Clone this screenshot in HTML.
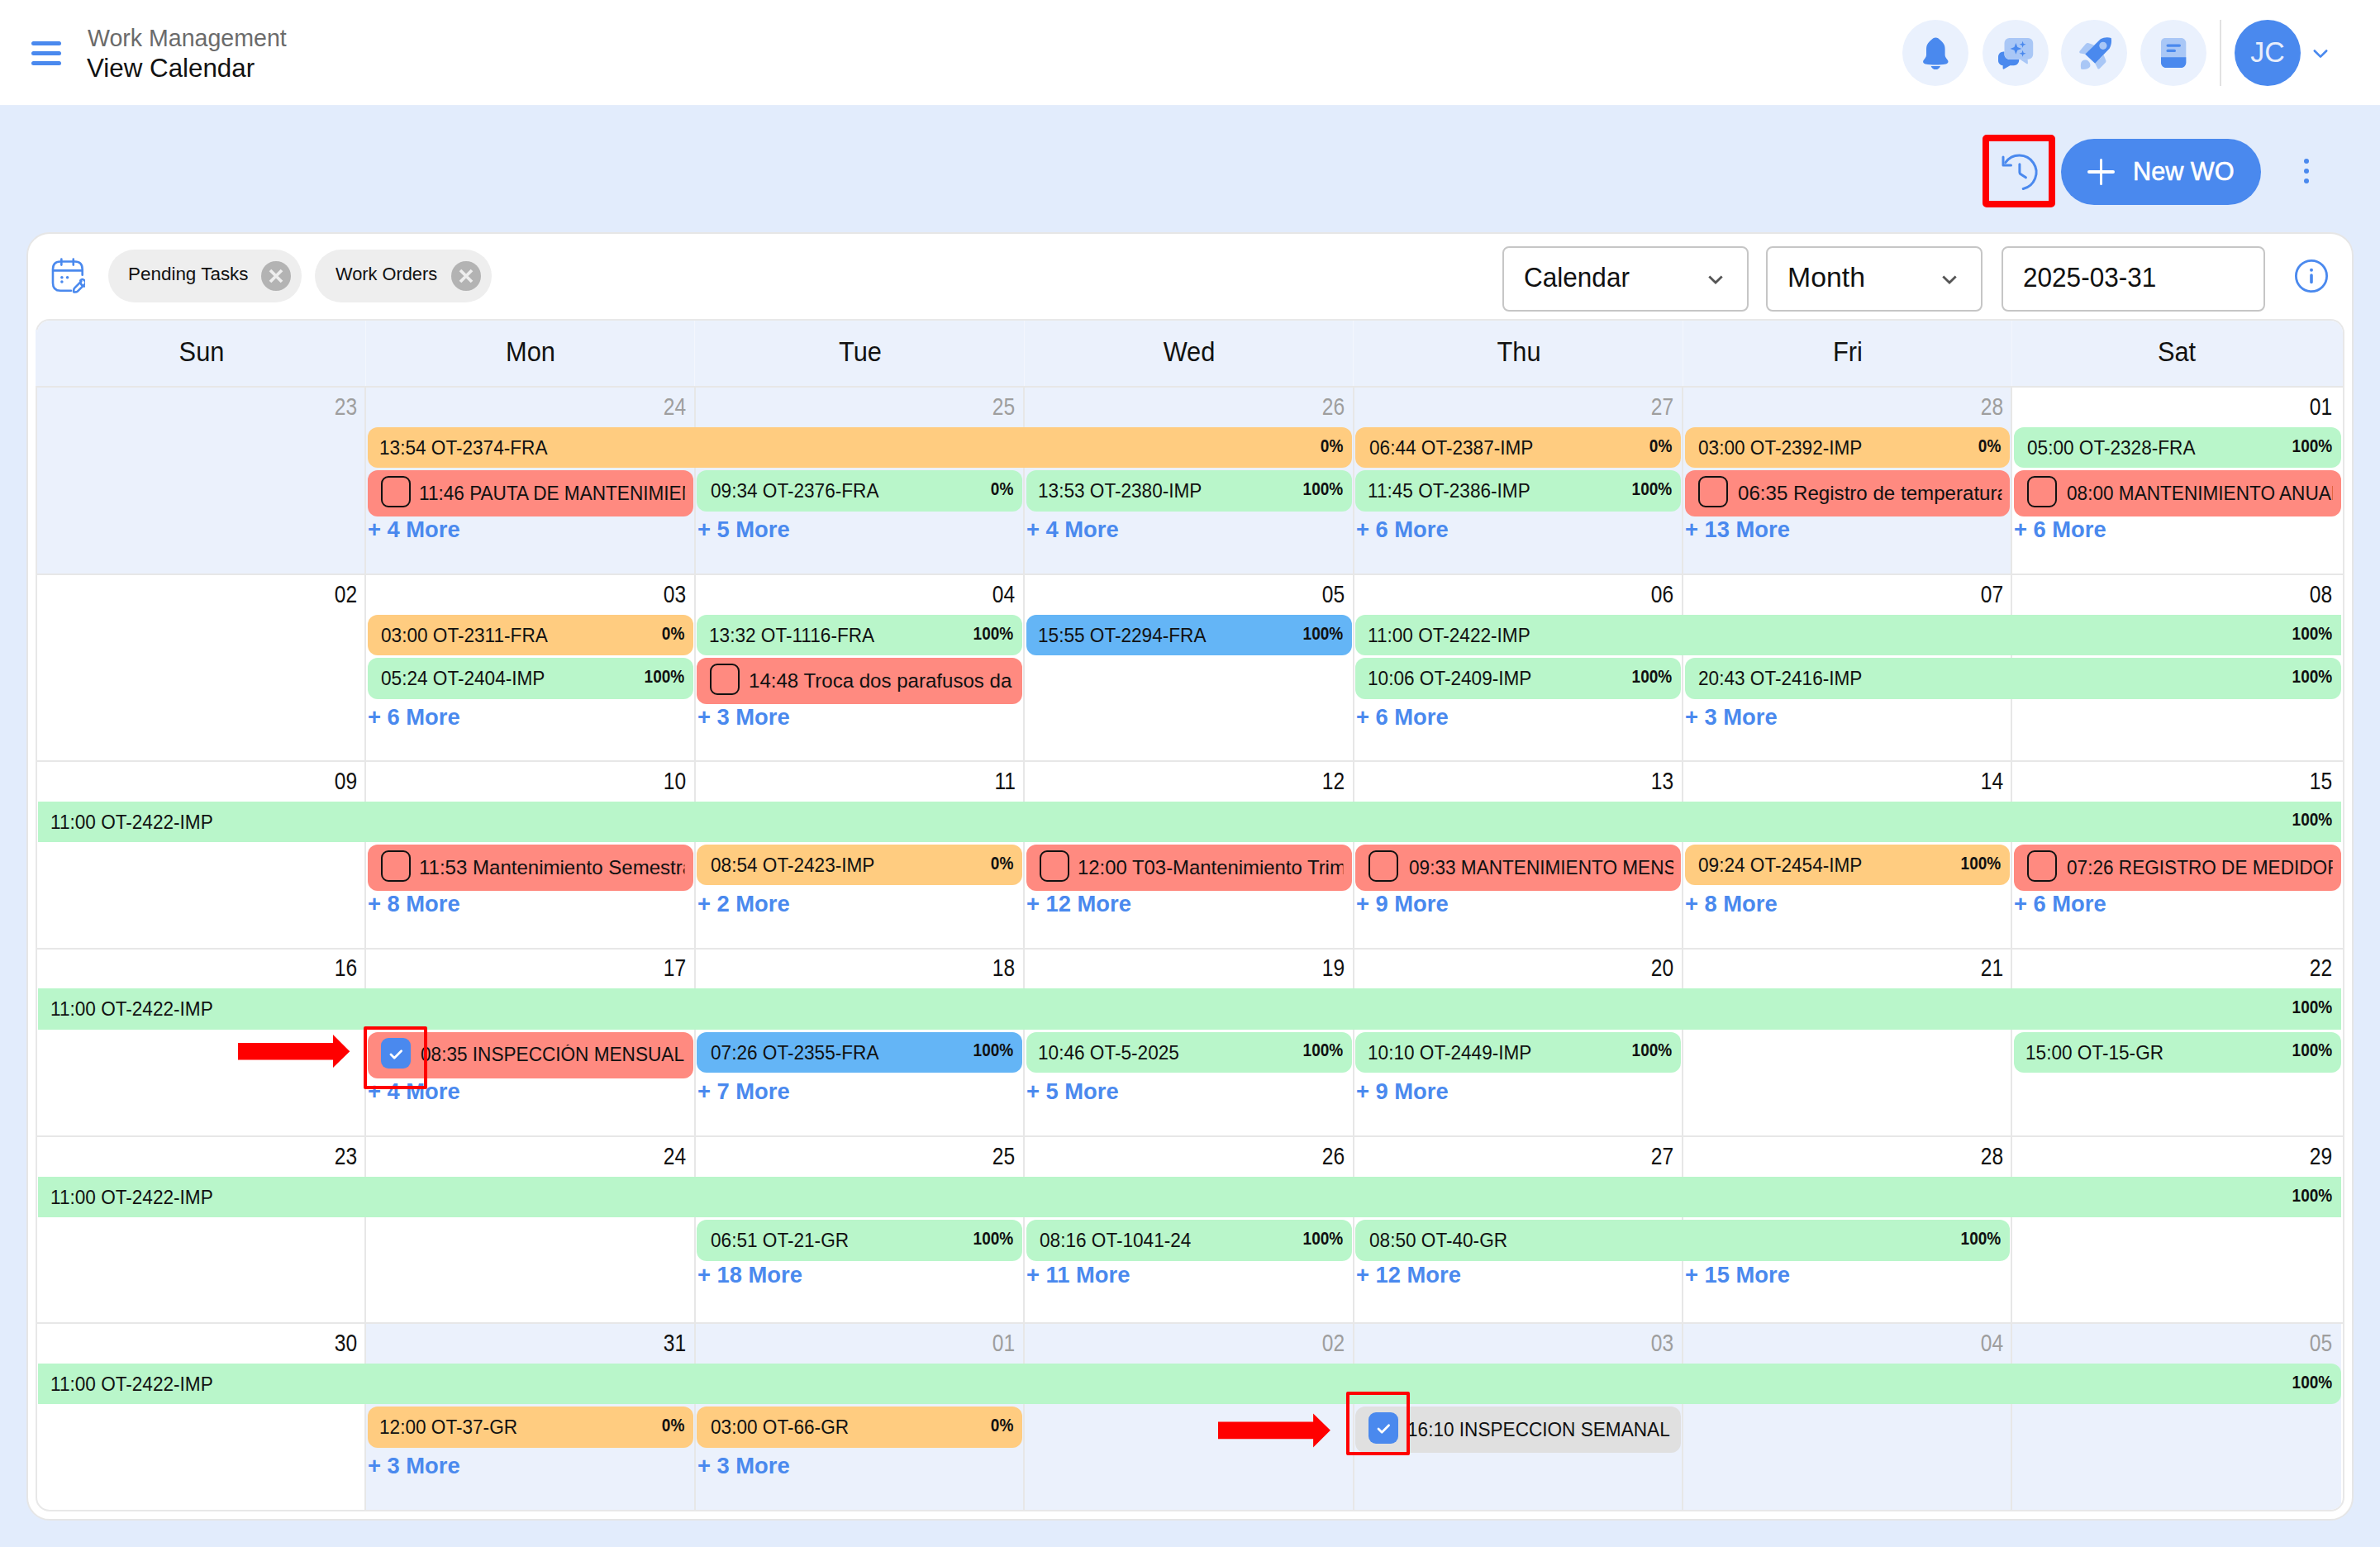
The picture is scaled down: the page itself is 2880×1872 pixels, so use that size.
<!DOCTYPE html>
<html><head><meta charset="utf-8"><title>View Calendar</title>
<style>
html,body{margin:0;padding:0;}
body{width:2880px;height:1872px;overflow:hidden;background:#e2ecfc;position:relative;font-family:"Liberation Sans", sans-serif;}
.a{position:absolute;}
.t{position:absolute;white-space:nowrap;font-family:"Liberation Sans", sans-serif;}
</style></head><body>
<div class="a" style="left:0.00px;top:0.00px;width:2880.00px;height:128.00px;background:#fff;border-bottom:1px solid #e5edfb;box-sizing:border-box;"></div>
<div class="a" style="left:37.80px;top:49.80px;width:36.20px;height:4.80px;background:#4a89ee;border-radius:3px;"></div>
<div class="a" style="left:37.80px;top:61.80px;width:36.20px;height:4.80px;background:#4a89ee;border-radius:3px;"></div>
<div class="a" style="left:37.80px;top:73.90px;width:36.20px;height:4.80px;background:#4a89ee;border-radius:3px;"></div>
<div class="t" style="left:105.50px;top:31.24px;font-size:29.6px;line-height:29.6px;color:#6b6b6b;font-weight:normal;transform:scaleX(0.965);transform-origin:0 0;">Work Management</div>
<div class="t" style="left:104.70px;top:67.08px;font-size:31.8px;line-height:31.8px;color:#111;font-weight:normal;transform:scaleX(0.985);transform-origin:0 0;">View Calendar</div>
<div class="a" style="left:2302.40px;top:24.00px;width:80.00px;height:80.00px;background:#eaf1fd;border-radius:50%;"></div>
<div class="a" style="left:2398.50px;top:24.00px;width:80.00px;height:80.00px;background:#eaf1fd;border-radius:50%;"></div>
<div class="a" style="left:2494.30px;top:24.00px;width:80.00px;height:80.00px;background:#eaf1fd;border-radius:50%;"></div>
<div class="a" style="left:2590.20px;top:24.00px;width:80.00px;height:80.00px;background:#eaf1fd;border-radius:50%;"></div>
<svg class="a" style="left:2322px;top:44px" width="41" height="42" viewBox="0 0 41 42">
<path d="M20.300 1.600C18 1.600 16.500 3 15 4.300 11 7.500 9 10.500 9 15.500V22.500C9 23.800 8.600 25 7.800 26L5.800 28.800C4.200 31 5.500 33 8 33.500 12 34.300 16 34.600 20.300 34.600S28.600 34.300 32.600 33.500C35.100 33 36.400 31 34.800 28.800L32.800 26C32 25 31.600 23.800 31.600 22.500V15.500C31.600 10.500 29.600 7.500 25.600 4.300 24.100 3 22.600 1.600 20.300 1.600Z" fill="#4a89ee"/>
<path d="M14.600 35.900H26C25 38.600 22.900 40.100 20.300 40.100S15.600 38.600 14.600 35.900Z" fill="#4a89ee"/>
</svg>
<svg class="a" style="left:2416px;top:44px" width="46" height="42" viewBox="0 0 46 42">
<path d="M8.500 18.600C4.800 18.600 2 21.400 2 25V29.300C2 32.500 4.400 35.100 7.600 35.200V38.800C7.600 39.600 8.400 40 9 39.600L16.400 35.200H21C24.300 35.200 27 32.600 27.200 29.300V27.700H15.500C12.200 27.700 9.500 25 9.500 21.700V18.600Z" fill="#4a89ee"/>
<rect x="9.500" y="1.900" width="34.700" height="25.800" rx="6" fill="#a9c7f6"/>
<path d="M27.800 27.600L36.600 33.300C37.200 33.700 38 33.300 37.900 32.600L37.600 27.600Z" fill="#a9c7f6"/>
<path d="M23.400 8L25.300 13 30.300 14.900 25.300 16.800 23.400 21.800 21.500 16.800 16.500 14.900 21.500 13Z" fill="#4a89ee"/>
<path d="M31.600 5.800L32.600 8.800 35.600 9.800 32.600 10.800 31.600 13.800 30.600 10.800 27.600 9.800 30.600 8.800Z" fill="#4a89ee"/>
<path d="M31.600 16.800L32.600 19.800 35.600 20.800 32.600 21.800 31.600 24.800 30.600 21.800 27.600 20.800 30.600 19.800Z" fill="#4a89ee"/>
</svg>
<svg class="a" style="left:2514px;top:44px" width="42" height="42" viewBox="0 0 42 42">
<path d="M2.600 17.800L9.800 9.300C10.800 8.200 12.200 7.800 13.500 8.300L20 10.600 9.200 21.400 3.600 20.600C2.300 20.400 1.800 18.900 2.600 17.800Z" fill="#a9c7f6"/>
<path d="M21.200 32.800L31.500 22.300 34.300 29C34.700 30 34.400 31.200 33.600 32L27 38.800C25.900 39.900 24.200 39.400 23.900 37.900Z" fill="#a9c7f6"/>
<path d="M6 29.400C3.600 31 3.400 35.800 4.400 39.800 8.400 40.300 13.300 39.600 14.900 37.100 16.400 34.600 14.600 30.200 11.600 29 9.800 28.300 7.500 28.500 6 29.400Z" fill="#a9c7f6"/>
<path d="M9.200 21.400L27.800 3.300C31.500 1.200 36 .700 40.700 1.900 41.500 6.500 40.800 11.200 38.600 14.700L21.200 32.800Z" fill="#4a89ee"/>
<circle cx="30.900" cy="11.300" r="4.600" fill="#a9c7f6"/>
</svg>
<svg class="a" style="left:2614px;top:45px" width="33" height="38" viewBox="0 0 33 38">
<path d="M6 1h19.300c3.300 0 6 2.700 6 6v24H1V6c0-2.800 2.200-5 5-5z" fill="#a9c7f6"/>
<path d="M1 24.300h30.300v6.700c0 3.300-2.700 6-6 6H7c-3.300 0-6-2.700-6-6z" fill="#4a89ee"/>
<rect x="7.500" y="8.500" width="17.500" height="3.200" rx="1.600" fill="#4a89ee"/>
<rect x="7.500" y="14.800" width="11.500" height="3.200" rx="1.600" fill="#4a89ee"/>
</svg>
<div class="a" style="left:2686.20px;top:24.00px;width:1.60px;height:80.00px;background:#e2e2e2;"></div>
<div class="a" style="left:2704.00px;top:24.00px;width:80.00px;height:80.00px;background:#4a89ee;border-radius:50%;"></div>
<div class="t" style="left:2244.00px;width:1000px;text-align:center;top:45.27px;font-size:35px;line-height:35px;color:#e8eefb;font-weight:normal;transform:scaleX(0.97);transform-origin:50% 0;">JC</div>
<svg class="a" style="left:2796px;top:56px" width="24" height="18" viewBox="0 0 24 18"><path d="M4.800 5.500l7.200 7.200 7.200-7.200" fill="none" stroke="#4a89ee" stroke-width="2.6" stroke-linecap="round" stroke-linejoin="round"/></svg>
<svg class="a" style="left:2413px;top:178px" width="60" height="60" viewBox="0 0 60 60">
<path d="M13.800 18.700A20.500 20.500 0 1 1 35.200 50.500" fill="none" stroke="#4a89ee" stroke-width="3" stroke-linecap="round"/>
<path d="M11 12v10h9.500" fill="none" stroke="#4a89ee" stroke-width="3" stroke-linecap="round" stroke-linejoin="round"/>
<path d="M30.900 20.800v9.600c0 1 .500 1.800 1.300 2.300l6.200 4.100" fill="none" stroke="#4a89ee" stroke-width="3" stroke-linecap="round" stroke-linejoin="round"/>
</svg>
<div class="a" style="left:2398.50px;top:162.80px;width:88.50px;height:88.30px;border:8.2px solid #ff0000;border-radius:5px;box-sizing:border-box;"></div>
<div class="a" style="left:2494.40px;top:167.80px;width:241.60px;height:79.80px;background:#4a89ee;border-radius:40px;"></div>
<div class="a" style="left:2526.10px;top:206.20px;width:32.60px;height:3.40px;background:#fff;border-radius:2px;"></div>
<div class="a" style="left:2540.70px;top:191.60px;width:3.40px;height:32.50px;background:#fff;border-radius:2px;"></div>
<div class="t" style="left:2581.20px;top:191.21px;font-size:32px;line-height:32px;color:#fff;font-weight:normal;transform:scaleX(0.958);transform-origin:0 0;-webkit-text-stroke:0.6px #fff;">New WO</div>
<div class="a" style="left:2787.60px;top:191.70px;width:6.40px;height:6.40px;background:#4a89ee;border-radius:50%;"></div>
<div class="a" style="left:2787.60px;top:203.80px;width:6.40px;height:6.40px;background:#4a89ee;border-radius:50%;"></div>
<div class="a" style="left:2787.60px;top:215.60px;width:6.40px;height:6.40px;background:#4a89ee;border-radius:50%;"></div>
<div class="a" style="left:31.50px;top:280.50px;width:2816.50px;height:1559.50px;background:#fff;border:2px solid #e6e6e6;border-radius:28px;box-sizing:border-box;"></div>
<svg class="a" style="left:60.5px;top:310.5px" width="42.6" height="44.4" viewBox="0 0 46 48">
<path d="M14.400 2.700v7.700M30 2.700v7.700" fill="none" stroke="#4a89ee" stroke-width="2.800" stroke-linecap="round"/>
<path d="M27 44H13c-6.500 0-9.800-3.800-9.800-10V16.200c0-6.200 3.300-10.200 9.800-10.200h19c6.500 0 9.800 4 9.800 10.200V23.500" fill="none" stroke="#4a89ee" stroke-width="2.800" stroke-linecap="round" stroke-linejoin="round"/>
<path d="M4 17.700h37.500" fill="none" stroke="#4a89ee" stroke-width="2.800" stroke-linecap="round"/>
<circle cx="15" cy="26.700" r="1.900" fill="#4a89ee"/><circle cx="22.200" cy="26.700" r="1.900" fill="#4a89ee"/><circle cx="15" cy="32.400" r="1.900" fill="#4a89ee"/>
<path d="M40.300 31.800l-8.800 8.800c-.400.400-.700 1-.800 1.500l-.400 2.500c-.100.900.500 1.500 1.400 1.400l2.500-.400c.600-.100 1.100-.400 1.500-.800l8.800-8.800c1.500-1.500 2.200-3.200 0-5.400-2.100-2.200-3.800-1.500-5.300 0z" fill="none" stroke="#4a89ee" stroke-width="2.800" stroke-linejoin="round"/>
<path d="M39 33.100c.700 2.500 2.700 4.500 5.200 5.200" fill="none" stroke="#4a89ee" stroke-width="2.800" stroke-linecap="round"/>
</svg>
<div class="a" style="left:130.80px;top:302.30px;width:234.00px;height:64.00px;background:#eeeeee;border-radius:32px;"></div><div class="t" style="left:154.80px;top:321.38px;font-size:22px;line-height:22px;color:#111;font-weight:normal;transform:scaleX(1.02);transform-origin:0 0;">Pending Tasks</div><svg class="a" style="left:315.80px;top:315.9px" width="36" height="36" viewBox="0 0 36 36"><circle cx="18" cy="18" r="18" fill="#b3b3b3"/><path d="M11 11l14 14M25 11L11 25" stroke="#eeeeee" stroke-width="3.800"/></svg>
<div class="a" style="left:381.00px;top:302.30px;width:213.70px;height:64.00px;background:#eeeeee;border-radius:32px;"></div><div class="t" style="left:406.00px;top:321.38px;font-size:22px;line-height:22px;color:#111;font-weight:normal;transform:scaleX(0.99);transform-origin:0 0;">Work Orders</div><svg class="a" style="left:545.70px;top:315.9px" width="36" height="36" viewBox="0 0 36 36"><circle cx="18" cy="18" r="18" fill="#b3b3b3"/><path d="M11 11l14 14M25 11L11 25" stroke="#eeeeee" stroke-width="3.800"/></svg>
<div class="a" style="left:1818.00px;top:298.00px;width:298.40px;height:78.80px;background:#fff;border:2px solid #c6c6c6;border-radius:8px;box-sizing:border-box;"></div><div class="t" style="left:1844.20px;top:320.29px;font-size:32.5px;line-height:32.5px;color:#111;font-weight:normal;transform:scaleX(0.97);transform-origin:0 0;">Calendar</div><svg class="a" style="left:2064.40px;top:326px" width="24" height="24" viewBox="0 0 24 24"><path d="M4.300 8.400l7.700 7.700 7.700-7.700" fill="none" stroke="#555" stroke-width="2.800"/></svg>
<div class="a" style="left:2136.50px;top:298.00px;width:262.50px;height:78.80px;background:#fff;border:2px solid #c6c6c6;border-radius:8px;box-sizing:border-box;"></div><div class="t" style="left:2162.50px;top:320.29px;font-size:32.5px;line-height:32.5px;color:#111;font-weight:normal;transform:scaleX(1.04);transform-origin:0 0;">Month</div><svg class="a" style="left:2347.00px;top:326px" width="24" height="24" viewBox="0 0 24 24"><path d="M4.300 8.400l7.700 7.700 7.700-7.700" fill="none" stroke="#555" stroke-width="2.800"/></svg>
<div class="a" style="left:2421.50px;top:298.00px;width:319.10px;height:78.80px;background:#fff;border:2px solid #c6c6c6;border-radius:8px;box-sizing:border-box;"></div><div class="t" style="left:2447.90px;top:320.29px;font-size:32.5px;line-height:32.5px;color:#111;font-weight:normal;transform:scaleX(0.97);transform-origin:0 0;">2025-03-31</div>
<svg class="a" style="left:2772.9px;top:310.3px" width="48" height="48" viewBox="0 0 48 48"><circle cx="24" cy="24" r="18.600" fill="none" stroke="#4a89ee" stroke-width="2.800"/><circle cx="24" cy="16.700" r="2" fill="#4a89ee"/><path d="M24 23v8.500" stroke="#4a89ee" stroke-width="3.600" stroke-linecap="round"/></svg>
<div class="a" style="left:43px;top:386px;width:2794px;height:1443px;border:2px solid #e8e8e8;border-radius:17px;box-sizing:border-box;overflow:hidden;background:#fff">
<div class="a" style="left:0.00px;top:0.00px;width:2790.00px;height:79.00px;background:#ebf1fc;"></div>
<div class="a" style="left:0.00px;top:80.00px;width:397.20px;height:227.00px;background:#ebf1fc;"></div>
<div class="a" style="left:397.20px;top:80.00px;width:398.40px;height:227.00px;background:#ebf1fc;"></div>
<div class="a" style="left:795.60px;top:80.00px;width:398.40px;height:227.00px;background:#ebf1fc;"></div>
<div class="a" style="left:1194.00px;top:80.00px;width:398.60px;height:227.00px;background:#ebf1fc;"></div>
<div class="a" style="left:1592.60px;top:80.00px;width:398.40px;height:227.00px;background:#ebf1fc;"></div>
<div class="a" style="left:1991.00px;top:80.00px;width:398.20px;height:227.00px;background:#ebf1fc;"></div>
<div class="a" style="left:397.20px;top:1213.00px;width:398.40px;height:227.00px;background:#ebf1fc;"></div>
<div class="a" style="left:795.60px;top:1213.00px;width:398.40px;height:227.00px;background:#ebf1fc;"></div>
<div class="a" style="left:1194.00px;top:1213.00px;width:398.60px;height:227.00px;background:#ebf1fc;"></div>
<div class="a" style="left:1592.60px;top:1213.00px;width:398.40px;height:227.00px;background:#ebf1fc;"></div>
<div class="a" style="left:1991.00px;top:1213.00px;width:398.20px;height:227.00px;background:#ebf1fc;"></div>
<div class="a" style="left:2389.20px;top:1213.00px;width:398.40px;height:227.00px;background:#ebf1fc;"></div>
<div class="a" style="left:396.70px;top:0.00px;width:1.00px;height:79.00px;background:#f3f6fd;"></div>
<div class="a" style="left:795.10px;top:0.00px;width:1.00px;height:79.00px;background:#f3f6fd;"></div>
<div class="a" style="left:1193.50px;top:0.00px;width:1.00px;height:79.00px;background:#f3f6fd;"></div>
<div class="a" style="left:1592.10px;top:0.00px;width:1.00px;height:79.00px;background:#f3f6fd;"></div>
<div class="a" style="left:1990.50px;top:0.00px;width:1.00px;height:79.00px;background:#f3f6fd;"></div>
<div class="a" style="left:2388.70px;top:0.00px;width:1.00px;height:79.00px;background:#f3f6fd;"></div>
<div class="a" style="left:0.00px;top:79.00px;width:2790.00px;height:2.00px;background:#e7e7e7;"></div>
<div class="a" style="left:0.00px;top:306.00px;width:2790.00px;height:2.00px;background:#e7e7e7;"></div>
<div class="a" style="left:0.00px;top:531.80px;width:2790.00px;height:2.00px;background:#e7e7e7;"></div>
<div class="a" style="left:0.00px;top:758.50px;width:2790.00px;height:2.00px;background:#e7e7e7;"></div>
<div class="a" style="left:0.00px;top:986.00px;width:2790.00px;height:2.00px;background:#e7e7e7;"></div>
<div class="a" style="left:0.00px;top:1212.00px;width:2790.00px;height:2.00px;background:#e7e7e7;"></div>
<div class="a" style="left:396.20px;top:81.00px;width:2.00px;height:1358.00px;background:#e7e7e7;"></div>
<div class="a" style="left:794.60px;top:81.00px;width:2.00px;height:1358.00px;background:#e7e7e7;"></div>
<div class="a" style="left:1193.00px;top:81.00px;width:2.00px;height:1358.00px;background:#e7e7e7;"></div>
<div class="a" style="left:1591.60px;top:81.00px;width:2.00px;height:1358.00px;background:#e7e7e7;"></div>
<div class="a" style="left:1990.00px;top:81.00px;width:2.00px;height:1358.00px;background:#e7e7e7;"></div>
<div class="a" style="left:2388.20px;top:81.00px;width:2.00px;height:1358.00px;background:#e7e7e7;"></div>
</div>
<div class="a" style="left:43.00px;top:399.00px;width:2.20px;height:68.00px;background:#ebf1fc;"></div>
<div class="t" style="left:-255.90px;width:1000px;text-align:center;top:409.77px;font-size:32.4px;line-height:32.4px;color:#111;font-weight:normal;transform:scaleX(0.95);transform-origin:50% 0;">Sun</div>
<div class="t" style="left:142.40px;width:1000px;text-align:center;top:409.77px;font-size:32.4px;line-height:32.4px;color:#111;font-weight:normal;transform:scaleX(0.95);transform-origin:50% 0;">Mon</div>
<div class="t" style="left:540.80px;width:1000px;text-align:center;top:409.77px;font-size:32.4px;line-height:32.4px;color:#111;font-weight:normal;transform:scaleX(0.95);transform-origin:50% 0;">Tue</div>
<div class="t" style="left:939.30px;width:1000px;text-align:center;top:409.77px;font-size:32.4px;line-height:32.4px;color:#111;font-weight:normal;transform:scaleX(0.95);transform-origin:50% 0;">Wed</div>
<div class="t" style="left:1337.80px;width:1000px;text-align:center;top:409.77px;font-size:32.4px;line-height:32.4px;color:#111;font-weight:normal;transform:scaleX(0.95);transform-origin:50% 0;">Thu</div>
<div class="t" style="left:1736.10px;width:1000px;text-align:center;top:409.77px;font-size:32.4px;line-height:32.4px;color:#111;font-weight:normal;transform:scaleX(0.95);transform-origin:50% 0;">Fri</div>
<div class="t" style="left:2134.40px;width:1000px;text-align:center;top:409.77px;font-size:32.4px;line-height:32.4px;color:#111;font-weight:normal;transform:scaleX(0.95);transform-origin:50% 0;">Sat</div>
<div class="t" style="right:2448.30px;top:477.74px;font-size:28.9px;line-height:28.9px;color:#9e9e9e;font-weight:normal;transform:scaleX(0.85);transform-origin:100% 0;">23</div>
<div class="t" style="right:2049.90px;top:477.74px;font-size:28.9px;line-height:28.9px;color:#9e9e9e;font-weight:normal;transform:scaleX(0.85);transform-origin:100% 0;">24</div>
<div class="t" style="right:1651.50px;top:477.74px;font-size:28.9px;line-height:28.9px;color:#9e9e9e;font-weight:normal;transform:scaleX(0.85);transform-origin:100% 0;">25</div>
<div class="t" style="right:1252.90px;top:477.74px;font-size:28.9px;line-height:28.9px;color:#9e9e9e;font-weight:normal;transform:scaleX(0.85);transform-origin:100% 0;">26</div>
<div class="t" style="right:854.50px;top:477.74px;font-size:28.9px;line-height:28.9px;color:#9e9e9e;font-weight:normal;transform:scaleX(0.85);transform-origin:100% 0;">27</div>
<div class="t" style="right:456.30px;top:477.74px;font-size:28.9px;line-height:28.9px;color:#9e9e9e;font-weight:normal;transform:scaleX(0.85);transform-origin:100% 0;">28</div>
<div class="t" style="right:57.90px;top:477.74px;font-size:28.9px;line-height:28.9px;color:#111;font-weight:normal;transform:scaleX(0.85);transform-origin:100% 0;">01</div>
<div class="t" style="right:2448.30px;top:704.74px;font-size:28.9px;line-height:28.9px;color:#111;font-weight:normal;transform:scaleX(0.85);transform-origin:100% 0;">02</div>
<div class="t" style="right:2049.90px;top:704.74px;font-size:28.9px;line-height:28.9px;color:#111;font-weight:normal;transform:scaleX(0.85);transform-origin:100% 0;">03</div>
<div class="t" style="right:1651.50px;top:704.74px;font-size:28.9px;line-height:28.9px;color:#111;font-weight:normal;transform:scaleX(0.85);transform-origin:100% 0;">04</div>
<div class="t" style="right:1252.90px;top:704.74px;font-size:28.9px;line-height:28.9px;color:#111;font-weight:normal;transform:scaleX(0.85);transform-origin:100% 0;">05</div>
<div class="t" style="right:854.50px;top:704.74px;font-size:28.9px;line-height:28.9px;color:#111;font-weight:normal;transform:scaleX(0.85);transform-origin:100% 0;">06</div>
<div class="t" style="right:456.30px;top:704.74px;font-size:28.9px;line-height:28.9px;color:#111;font-weight:normal;transform:scaleX(0.85);transform-origin:100% 0;">07</div>
<div class="t" style="right:57.90px;top:704.74px;font-size:28.9px;line-height:28.9px;color:#111;font-weight:normal;transform:scaleX(0.85);transform-origin:100% 0;">08</div>
<div class="t" style="right:2448.30px;top:930.54px;font-size:28.9px;line-height:28.9px;color:#111;font-weight:normal;transform:scaleX(0.85);transform-origin:100% 0;">09</div>
<div class="t" style="right:2049.90px;top:930.54px;font-size:28.9px;line-height:28.9px;color:#111;font-weight:normal;transform:scaleX(0.85);transform-origin:100% 0;">10</div>
<div class="t" style="right:1651.50px;top:930.54px;font-size:28.9px;line-height:28.9px;color:#111;font-weight:normal;transform:scaleX(0.85);transform-origin:100% 0;">11</div>
<div class="t" style="right:1252.90px;top:930.54px;font-size:28.9px;line-height:28.9px;color:#111;font-weight:normal;transform:scaleX(0.85);transform-origin:100% 0;">12</div>
<div class="t" style="right:854.50px;top:930.54px;font-size:28.9px;line-height:28.9px;color:#111;font-weight:normal;transform:scaleX(0.85);transform-origin:100% 0;">13</div>
<div class="t" style="right:456.30px;top:930.54px;font-size:28.9px;line-height:28.9px;color:#111;font-weight:normal;transform:scaleX(0.85);transform-origin:100% 0;">14</div>
<div class="t" style="right:57.90px;top:930.54px;font-size:28.9px;line-height:28.9px;color:#111;font-weight:normal;transform:scaleX(0.85);transform-origin:100% 0;">15</div>
<div class="t" style="right:2448.30px;top:1157.24px;font-size:28.9px;line-height:28.9px;color:#111;font-weight:normal;transform:scaleX(0.85);transform-origin:100% 0;">16</div>
<div class="t" style="right:2049.90px;top:1157.24px;font-size:28.9px;line-height:28.9px;color:#111;font-weight:normal;transform:scaleX(0.85);transform-origin:100% 0;">17</div>
<div class="t" style="right:1651.50px;top:1157.24px;font-size:28.9px;line-height:28.9px;color:#111;font-weight:normal;transform:scaleX(0.85);transform-origin:100% 0;">18</div>
<div class="t" style="right:1252.90px;top:1157.24px;font-size:28.9px;line-height:28.9px;color:#111;font-weight:normal;transform:scaleX(0.85);transform-origin:100% 0;">19</div>
<div class="t" style="right:854.50px;top:1157.24px;font-size:28.9px;line-height:28.9px;color:#111;font-weight:normal;transform:scaleX(0.85);transform-origin:100% 0;">20</div>
<div class="t" style="right:456.30px;top:1157.24px;font-size:28.9px;line-height:28.9px;color:#111;font-weight:normal;transform:scaleX(0.85);transform-origin:100% 0;">21</div>
<div class="t" style="right:57.90px;top:1157.24px;font-size:28.9px;line-height:28.9px;color:#111;font-weight:normal;transform:scaleX(0.85);transform-origin:100% 0;">22</div>
<div class="t" style="right:2448.30px;top:1384.74px;font-size:28.9px;line-height:28.9px;color:#111;font-weight:normal;transform:scaleX(0.85);transform-origin:100% 0;">23</div>
<div class="t" style="right:2049.90px;top:1384.74px;font-size:28.9px;line-height:28.9px;color:#111;font-weight:normal;transform:scaleX(0.85);transform-origin:100% 0;">24</div>
<div class="t" style="right:1651.50px;top:1384.74px;font-size:28.9px;line-height:28.9px;color:#111;font-weight:normal;transform:scaleX(0.85);transform-origin:100% 0;">25</div>
<div class="t" style="right:1252.90px;top:1384.74px;font-size:28.9px;line-height:28.9px;color:#111;font-weight:normal;transform:scaleX(0.85);transform-origin:100% 0;">26</div>
<div class="t" style="right:854.50px;top:1384.74px;font-size:28.9px;line-height:28.9px;color:#111;font-weight:normal;transform:scaleX(0.85);transform-origin:100% 0;">27</div>
<div class="t" style="right:456.30px;top:1384.74px;font-size:28.9px;line-height:28.9px;color:#111;font-weight:normal;transform:scaleX(0.85);transform-origin:100% 0;">28</div>
<div class="t" style="right:57.90px;top:1384.74px;font-size:28.9px;line-height:28.9px;color:#111;font-weight:normal;transform:scaleX(0.85);transform-origin:100% 0;">29</div>
<div class="t" style="right:2448.30px;top:1610.74px;font-size:28.9px;line-height:28.9px;color:#111;font-weight:normal;transform:scaleX(0.85);transform-origin:100% 0;">30</div>
<div class="t" style="right:2049.90px;top:1610.74px;font-size:28.9px;line-height:28.9px;color:#111;font-weight:normal;transform:scaleX(0.85);transform-origin:100% 0;">31</div>
<div class="t" style="right:1651.50px;top:1610.74px;font-size:28.9px;line-height:28.9px;color:#9e9e9e;font-weight:normal;transform:scaleX(0.85);transform-origin:100% 0;">01</div>
<div class="t" style="right:1252.90px;top:1610.74px;font-size:28.9px;line-height:28.9px;color:#9e9e9e;font-weight:normal;transform:scaleX(0.85);transform-origin:100% 0;">02</div>
<div class="t" style="right:854.50px;top:1610.74px;font-size:28.9px;line-height:28.9px;color:#9e9e9e;font-weight:normal;transform:scaleX(0.85);transform-origin:100% 0;">03</div>
<div class="t" style="right:456.30px;top:1610.74px;font-size:28.9px;line-height:28.9px;color:#9e9e9e;font-weight:normal;transform:scaleX(0.85);transform-origin:100% 0;">04</div>
<div class="t" style="right:57.90px;top:1610.74px;font-size:28.9px;line-height:28.9px;color:#9e9e9e;font-weight:normal;transform:scaleX(0.85);transform-origin:100% 0;">05</div>
<div class="a" style="left:444.80px;top:516.90px;width:1190.80px;height:49.50px;background:#ffcc80;border-radius:12px 12px 12px 12px;"></div><div class="t" style="left:459.20px;top:529.93px;font-size:24.3px;line-height:24.3px;color:#111;font-weight:normal;transform:scaleX(0.93);transform-origin:0 0;">13:54 OT-2374-FRA</div><div class="t" style="right:1254.90px;top:528.54px;font-size:22.4px;line-height:22.4px;color:#111;font-weight:bold;transform:scaleX(0.85);transform-origin:100% 0;">0%</div>
<div class="a" style="left:1640.20px;top:516.90px;width:393.80px;height:49.50px;background:#ffcc80;border-radius:12px 12px 12px 12px;"></div><div class="t" style="left:1656.50px;top:529.93px;font-size:24.3px;line-height:24.3px;color:#111;font-weight:normal;transform:scaleX(0.93);transform-origin:0 0;">06:44 OT-2387-IMP</div><div class="t" style="right:856.50px;top:528.54px;font-size:22.4px;line-height:22.4px;color:#111;font-weight:bold;transform:scaleX(0.85);transform-origin:100% 0;">0%</div>
<div class="a" style="left:2038.60px;top:516.90px;width:393.60px;height:49.50px;background:#ffcc80;border-radius:12px 12px 12px 12px;"></div><div class="t" style="left:2054.90px;top:529.93px;font-size:24.3px;line-height:24.3px;color:#111;font-weight:normal;transform:scaleX(0.93);transform-origin:0 0;">03:00 OT-2392-IMP</div><div class="t" style="right:458.30px;top:528.54px;font-size:22.4px;line-height:22.4px;color:#111;font-weight:bold;transform:scaleX(0.85);transform-origin:100% 0;">0%</div>
<div class="a" style="left:2436.80px;top:516.90px;width:396.20px;height:49.50px;background:#b9f6ca;border-radius:12px 12px 12px 12px;"></div><div class="t" style="left:2453.10px;top:529.93px;font-size:24.3px;line-height:24.3px;color:#111;font-weight:normal;transform:scaleX(0.93);transform-origin:0 0;">05:00 OT-2328-FRA</div><div class="t" style="right:57.50px;top:528.54px;font-size:22.4px;line-height:22.4px;color:#111;font-weight:bold;transform:scaleX(0.85);transform-origin:100% 0;">100%</div>
<div class="a" style="left:444.80px;top:569.10px;width:393.80px;height:56.00px;background:#ff8a80;border-radius:12px 12px 12px 12px;"></div><div class="a" style="left:460.80px;top:576.30px;width:36.00px;height:37.60px;border:2.5px solid #111;box-sizing:border-box;border-radius:9px;"></div><div class="t" style="left:507.20px;top:584.83px;width:345.59px;overflow:hidden;white-space:nowrap;font-size:24.3px;line-height:24.3px;height:30px;color:#111;transform:scaleX(0.930);transform-origin:0 0">11:46 PAUTA DE MANTENIMIENTO</div>
<div class="a" style="left:843.20px;top:569.10px;width:393.80px;height:49.50px;background:#b9f6ca;border-radius:12px 12px 12px 12px;"></div><div class="t" style="left:859.50px;top:582.13px;font-size:24.3px;line-height:24.3px;color:#111;font-weight:normal;transform:scaleX(0.93);transform-origin:0 0;">09:34 OT-2376-FRA</div><div class="t" style="right:1653.50px;top:580.74px;font-size:22.4px;line-height:22.4px;color:#111;font-weight:bold;transform:scaleX(0.85);transform-origin:100% 0;">0%</div>
<div class="a" style="left:1241.60px;top:569.10px;width:394.00px;height:49.50px;background:#b9f6ca;border-radius:12px 12px 12px 12px;"></div><div class="t" style="left:1256.00px;top:582.13px;font-size:24.3px;line-height:24.3px;color:#111;font-weight:normal;transform:scaleX(0.93);transform-origin:0 0;">13:53 OT-2380-IMP</div><div class="t" style="right:1254.90px;top:580.74px;font-size:22.4px;line-height:22.4px;color:#111;font-weight:bold;transform:scaleX(0.85);transform-origin:100% 0;">100%</div>
<div class="a" style="left:1640.20px;top:569.10px;width:393.80px;height:49.50px;background:#b9f6ca;border-radius:12px 12px 12px 12px;"></div><div class="t" style="left:1654.60px;top:582.13px;font-size:24.3px;line-height:24.3px;color:#111;font-weight:normal;transform:scaleX(0.93);transform-origin:0 0;">11:45 OT-2386-IMP</div><div class="t" style="right:856.50px;top:580.74px;font-size:22.4px;line-height:22.4px;color:#111;font-weight:bold;transform:scaleX(0.85);transform-origin:100% 0;">100%</div>
<div class="a" style="left:2038.60px;top:569.10px;width:393.60px;height:56.00px;background:#ff8a80;border-radius:12px 12px 12px 12px;"></div><div class="a" style="left:2054.60px;top:576.30px;width:36.00px;height:37.60px;border:2.5px solid #111;box-sizing:border-box;border-radius:9px;"></div><div class="t" style="left:2102.90px;top:584.83px;width:322.02px;overflow:hidden;white-space:nowrap;font-size:24.3px;line-height:24.3px;height:30px;color:#111;transform:scaleX(0.992);transform-origin:0 0">06:35 Registro de temperatura</div>
<div class="a" style="left:2436.80px;top:569.10px;width:396.20px;height:56.00px;background:#ff8a80;border-radius:12px 12px 12px 12px;"></div><div class="a" style="left:2452.80px;top:576.30px;width:36.00px;height:37.60px;border:2.5px solid #111;box-sizing:border-box;border-radius:9px;"></div><div class="t" style="left:2501.10px;top:584.83px;width:346.13px;overflow:hidden;white-space:nowrap;font-size:24.3px;line-height:24.3px;height:30px;color:#111;transform:scaleX(0.930);transform-origin:0 0">08:00 MANTENIMIENTO ANUAL</div>
<div class="t" style="left:445.40px;top:627.08px;font-size:27.9px;line-height:27.9px;color:#4a89ee;font-weight:bold;transform:scaleX(0.98);transform-origin:0 0;">+ 4 More</div>
<div class="t" style="left:843.80px;top:627.08px;font-size:27.9px;line-height:27.9px;color:#4a89ee;font-weight:bold;transform:scaleX(0.98);transform-origin:0 0;">+ 5 More</div>
<div class="t" style="left:1242.20px;top:627.08px;font-size:27.9px;line-height:27.9px;color:#4a89ee;font-weight:bold;transform:scaleX(0.98);transform-origin:0 0;">+ 4 More</div>
<div class="t" style="left:1640.80px;top:627.08px;font-size:27.9px;line-height:27.9px;color:#4a89ee;font-weight:bold;transform:scaleX(0.98);transform-origin:0 0;">+ 6 More</div>
<div class="t" style="left:2039.20px;top:627.08px;font-size:27.9px;line-height:27.9px;color:#4a89ee;font-weight:bold;transform:scaleX(0.98);transform-origin:0 0;">+ 13 More</div>
<div class="t" style="left:2437.40px;top:627.08px;font-size:27.9px;line-height:27.9px;color:#4a89ee;font-weight:bold;transform:scaleX(0.98);transform-origin:0 0;">+ 6 More</div>
<div class="a" style="left:444.80px;top:743.90px;width:393.80px;height:49.50px;background:#ffcc80;border-radius:12px 12px 12px 12px;"></div><div class="t" style="left:461.10px;top:756.93px;font-size:24.3px;line-height:24.3px;color:#111;font-weight:normal;transform:scaleX(0.93);transform-origin:0 0;">03:00 OT-2311-FRA</div><div class="t" style="right:2051.90px;top:755.54px;font-size:22.4px;line-height:22.4px;color:#111;font-weight:bold;transform:scaleX(0.85);transform-origin:100% 0;">0%</div>
<div class="a" style="left:843.20px;top:743.90px;width:393.80px;height:49.50px;background:#b9f6ca;border-radius:12px 12px 12px 12px;"></div><div class="t" style="left:857.60px;top:756.93px;font-size:24.3px;line-height:24.3px;color:#111;font-weight:normal;transform:scaleX(0.93);transform-origin:0 0;">13:32 OT-1116-FRA</div><div class="t" style="right:1653.50px;top:755.54px;font-size:22.4px;line-height:22.4px;color:#111;font-weight:bold;transform:scaleX(0.85);transform-origin:100% 0;">100%</div>
<div class="a" style="left:1241.60px;top:743.90px;width:394.00px;height:49.50px;background:#64b5f6;border-radius:12px 12px 12px 12px;"></div><div class="t" style="left:1256.00px;top:756.93px;font-size:24.3px;line-height:24.3px;color:#111;font-weight:normal;transform:scaleX(0.93);transform-origin:0 0;">15:55 OT-2294-FRA</div><div class="t" style="right:1254.90px;top:755.54px;font-size:22.4px;line-height:22.4px;color:#111;font-weight:bold;transform:scaleX(0.85);transform-origin:100% 0;">100%</div>
<div class="a" style="left:1640.20px;top:743.90px;width:1192.80px;height:49.50px;background:#b9f6ca;border-radius:12px 0px 0px 12px;"></div><div class="t" style="left:1654.60px;top:756.93px;font-size:24.3px;line-height:24.3px;color:#111;font-weight:normal;transform:scaleX(0.93);transform-origin:0 0;">11:00 OT-2422-IMP</div><div class="t" style="right:57.50px;top:755.54px;font-size:22.4px;line-height:22.4px;color:#111;font-weight:bold;transform:scaleX(0.85);transform-origin:100% 0;">100%</div>
<div class="a" style="left:444.80px;top:796.10px;width:393.80px;height:49.50px;background:#b9f6ca;border-radius:12px 12px 12px 12px;"></div><div class="t" style="left:461.10px;top:809.13px;font-size:24.3px;line-height:24.3px;color:#111;font-weight:normal;transform:scaleX(0.93);transform-origin:0 0;">05:24 OT-2404-IMP</div><div class="t" style="right:2051.90px;top:807.74px;font-size:22.4px;line-height:22.4px;color:#111;font-weight:bold;transform:scaleX(0.85);transform-origin:100% 0;">100%</div>
<div class="a" style="left:843.20px;top:796.10px;width:393.80px;height:56.00px;background:#ff8a80;border-radius:12px 12px 12px 12px;"></div><div class="a" style="left:859.20px;top:803.30px;width:36.00px;height:37.60px;border:2.5px solid #111;box-sizing:border-box;border-radius:9px;"></div><div class="t" style="left:905.60px;top:811.83px;width:324.65px;overflow:hidden;white-space:nowrap;font-size:24.3px;line-height:24.3px;height:30px;color:#111;transform:scaleX(0.990);transform-origin:0 0">14:48 Troca dos parafusos da</div>
<div class="a" style="left:1640.20px;top:796.10px;width:393.80px;height:49.50px;background:#b9f6ca;border-radius:12px 12px 12px 12px;"></div><div class="t" style="left:1654.60px;top:809.13px;font-size:24.3px;line-height:24.3px;color:#111;font-weight:normal;transform:scaleX(0.93);transform-origin:0 0;">10:06 OT-2409-IMP</div><div class="t" style="right:856.50px;top:807.74px;font-size:22.4px;line-height:22.4px;color:#111;font-weight:bold;transform:scaleX(0.85);transform-origin:100% 0;">100%</div>
<div class="a" style="left:2038.60px;top:796.10px;width:794.40px;height:49.50px;background:#b9f6ca;border-radius:12px 12px 12px 12px;"></div><div class="t" style="left:2054.90px;top:809.13px;font-size:24.3px;line-height:24.3px;color:#111;font-weight:normal;transform:scaleX(0.93);transform-origin:0 0;">20:43 OT-2416-IMP</div><div class="t" style="right:57.50px;top:807.74px;font-size:22.4px;line-height:22.4px;color:#111;font-weight:bold;transform:scaleX(0.85);transform-origin:100% 0;">100%</div>
<div class="t" style="left:445.40px;top:854.08px;font-size:27.9px;line-height:27.9px;color:#4a89ee;font-weight:bold;transform:scaleX(0.98);transform-origin:0 0;">+ 6 More</div>
<div class="t" style="left:843.80px;top:854.08px;font-size:27.9px;line-height:27.9px;color:#4a89ee;font-weight:bold;transform:scaleX(0.98);transform-origin:0 0;">+ 3 More</div>
<div class="t" style="left:1640.80px;top:854.08px;font-size:27.9px;line-height:27.9px;color:#4a89ee;font-weight:bold;transform:scaleX(0.98);transform-origin:0 0;">+ 6 More</div>
<div class="t" style="left:2039.20px;top:854.08px;font-size:27.9px;line-height:27.9px;color:#4a89ee;font-weight:bold;transform:scaleX(0.98);transform-origin:0 0;">+ 3 More</div>
<div class="a" style="left:46.20px;top:969.70px;width:2786.80px;height:49.50px;background:#b9f6ca;border-radius:0px 0px 0px 0px;"></div><div class="t" style="left:60.60px;top:982.73px;font-size:24.3px;line-height:24.3px;color:#111;font-weight:normal;transform:scaleX(0.93);transform-origin:0 0;">11:00 OT-2422-IMP</div><div class="t" style="right:57.50px;top:981.34px;font-size:22.4px;line-height:22.4px;color:#111;font-weight:bold;transform:scaleX(0.85);transform-origin:100% 0;">100%</div>
<div class="a" style="left:444.80px;top:1021.90px;width:393.80px;height:56.00px;background:#ff8a80;border-radius:12px 12px 12px 12px;"></div><div class="a" style="left:460.80px;top:1029.10px;width:36.00px;height:37.60px;border:2.5px solid #111;box-sizing:border-box;border-radius:9px;"></div><div class="t" style="left:507.20px;top:1037.63px;width:324.89px;overflow:hidden;white-space:nowrap;font-size:24.3px;line-height:24.3px;height:30px;color:#111;transform:scaleX(0.989);transform-origin:0 0">11:53 Mantenimiento Semestral</div>
<div class="a" style="left:843.20px;top:1021.90px;width:393.80px;height:49.50px;background:#ffcc80;border-radius:12px 12px 12px 12px;"></div><div class="t" style="left:859.50px;top:1034.93px;font-size:24.3px;line-height:24.3px;color:#111;font-weight:normal;transform:scaleX(0.93);transform-origin:0 0;">08:54 OT-2423-IMP</div><div class="t" style="right:1653.50px;top:1033.54px;font-size:22.4px;line-height:22.4px;color:#111;font-weight:bold;transform:scaleX(0.85);transform-origin:100% 0;">0%</div>
<div class="a" style="left:1241.60px;top:1021.90px;width:394.00px;height:56.00px;background:#ff8a80;border-radius:12px 12px 12px 12px;"></div><div class="a" style="left:1257.60px;top:1029.10px;width:36.00px;height:37.60px;border:2.5px solid #111;box-sizing:border-box;border-radius:9px;"></div><div class="t" style="left:1304.00px;top:1037.63px;width:327.33px;overflow:hidden;white-space:nowrap;font-size:24.3px;line-height:24.3px;height:30px;color:#111;transform:scaleX(0.983);transform-origin:0 0">12:00 T03-Mantenimiento Trimestral</div>
<div class="a" style="left:1640.20px;top:1021.90px;width:393.80px;height:56.00px;background:#ff8a80;border-radius:12px 12px 12px 12px;"></div><div class="a" style="left:1656.20px;top:1029.10px;width:36.00px;height:37.60px;border:2.5px solid #111;box-sizing:border-box;border-radius:9px;"></div><div class="t" style="left:1704.50px;top:1037.63px;width:343.55px;overflow:hidden;white-space:nowrap;font-size:24.3px;line-height:24.3px;height:30px;color:#111;transform:scaleX(0.930);transform-origin:0 0">09:33 MANTENIMIENTO MENSUAL</div>
<div class="a" style="left:2038.60px;top:1021.90px;width:393.60px;height:49.50px;background:#ffcc80;border-radius:12px 12px 12px 12px;"></div><div class="t" style="left:2054.90px;top:1034.93px;font-size:24.3px;line-height:24.3px;color:#111;font-weight:normal;transform:scaleX(0.93);transform-origin:0 0;">09:24 OT-2454-IMP</div><div class="t" style="right:458.30px;top:1033.54px;font-size:22.4px;line-height:22.4px;color:#111;font-weight:bold;transform:scaleX(0.85);transform-origin:100% 0;">100%</div>
<div class="a" style="left:2436.80px;top:1021.90px;width:396.20px;height:56.00px;background:#ff8a80;border-radius:12px 12px 12px 12px;"></div><div class="a" style="left:2452.80px;top:1029.10px;width:36.00px;height:37.60px;border:2.5px solid #111;box-sizing:border-box;border-radius:9px;"></div><div class="t" style="left:2501.10px;top:1037.63px;width:346.13px;overflow:hidden;white-space:nowrap;font-size:24.3px;line-height:24.3px;height:30px;color:#111;transform:scaleX(0.930);transform-origin:0 0">07:26 REGISTRO DE MEDIDOR</div>
<div class="t" style="left:445.40px;top:1079.88px;font-size:27.9px;line-height:27.9px;color:#4a89ee;font-weight:bold;transform:scaleX(0.98);transform-origin:0 0;">+ 8 More</div>
<div class="t" style="left:843.80px;top:1079.88px;font-size:27.9px;line-height:27.9px;color:#4a89ee;font-weight:bold;transform:scaleX(0.98);transform-origin:0 0;">+ 2 More</div>
<div class="t" style="left:1242.20px;top:1079.88px;font-size:27.9px;line-height:27.9px;color:#4a89ee;font-weight:bold;transform:scaleX(0.98);transform-origin:0 0;">+ 12 More</div>
<div class="t" style="left:1640.80px;top:1079.88px;font-size:27.9px;line-height:27.9px;color:#4a89ee;font-weight:bold;transform:scaleX(0.98);transform-origin:0 0;">+ 9 More</div>
<div class="t" style="left:2039.20px;top:1079.88px;font-size:27.9px;line-height:27.9px;color:#4a89ee;font-weight:bold;transform:scaleX(0.98);transform-origin:0 0;">+ 8 More</div>
<div class="t" style="left:2437.40px;top:1079.88px;font-size:27.9px;line-height:27.9px;color:#4a89ee;font-weight:bold;transform:scaleX(0.98);transform-origin:0 0;">+ 6 More</div>
<div class="a" style="left:46.20px;top:1196.40px;width:2786.80px;height:49.50px;background:#b9f6ca;border-radius:0px 0px 0px 0px;"></div><div class="t" style="left:60.60px;top:1209.43px;font-size:24.3px;line-height:24.3px;color:#111;font-weight:normal;transform:scaleX(0.93);transform-origin:0 0;">11:00 OT-2422-IMP</div><div class="t" style="right:57.50px;top:1208.04px;font-size:22.4px;line-height:22.4px;color:#111;font-weight:bold;transform:scaleX(0.85);transform-origin:100% 0;">100%</div>
<div class="a" style="left:444.80px;top:1248.60px;width:393.80px;height:56.00px;background:#ff8a80;border-radius:12px 12px 12px 12px;"></div><div class="a" style="left:460.80px;top:1255.80px;width:36.00px;height:37.60px;background:#4a89ee;border-radius:9px;"></div><svg class="a" style="left:460.80px;top:1255.80px" width="36" height="38" viewBox="0 0 36 38"><path d="M12 20l4.200 4.200 8.400-8.400" fill="none" stroke="#fff" stroke-width="2.700" stroke-linecap="round" stroke-linejoin="round"/></svg><div class="t" style="left:509.10px;top:1264.33px;width:343.55px;overflow:hidden;white-space:nowrap;font-size:24.3px;line-height:24.3px;height:30px;color:#111;transform:scaleX(0.930);transform-origin:0 0">08:35 INSPECCIÓN MENSUAL</div>
<div class="a" style="left:843.20px;top:1248.60px;width:393.80px;height:49.50px;background:#64b5f6;border-radius:12px 12px 12px 12px;"></div><div class="t" style="left:859.50px;top:1261.63px;font-size:24.3px;line-height:24.3px;color:#111;font-weight:normal;transform:scaleX(0.93);transform-origin:0 0;">07:26 OT-2355-FRA</div><div class="t" style="right:1653.50px;top:1260.24px;font-size:22.4px;line-height:22.4px;color:#111;font-weight:bold;transform:scaleX(0.85);transform-origin:100% 0;">100%</div>
<div class="a" style="left:1241.60px;top:1248.60px;width:394.00px;height:49.50px;background:#b9f6ca;border-radius:12px 12px 12px 12px;"></div><div class="t" style="left:1256.00px;top:1261.63px;font-size:24.3px;line-height:24.3px;color:#111;font-weight:normal;transform:scaleX(0.93);transform-origin:0 0;">10:46 OT-5-2025</div><div class="t" style="right:1254.90px;top:1260.24px;font-size:22.4px;line-height:22.4px;color:#111;font-weight:bold;transform:scaleX(0.85);transform-origin:100% 0;">100%</div>
<div class="a" style="left:1640.20px;top:1248.60px;width:393.80px;height:49.50px;background:#b9f6ca;border-radius:12px 12px 12px 12px;"></div><div class="t" style="left:1654.60px;top:1261.63px;font-size:24.3px;line-height:24.3px;color:#111;font-weight:normal;transform:scaleX(0.93);transform-origin:0 0;">10:10 OT-2449-IMP</div><div class="t" style="right:856.50px;top:1260.24px;font-size:22.4px;line-height:22.4px;color:#111;font-weight:bold;transform:scaleX(0.85);transform-origin:100% 0;">100%</div>
<div class="a" style="left:2436.80px;top:1248.60px;width:396.20px;height:49.50px;background:#b9f6ca;border-radius:12px 12px 12px 12px;"></div><div class="t" style="left:2451.20px;top:1261.63px;font-size:24.3px;line-height:24.3px;color:#111;font-weight:normal;transform:scaleX(0.93);transform-origin:0 0;">15:00 OT-15-GR</div><div class="t" style="right:57.50px;top:1260.24px;font-size:22.4px;line-height:22.4px;color:#111;font-weight:bold;transform:scaleX(0.85);transform-origin:100% 0;">100%</div>
<div class="t" style="left:445.40px;top:1306.58px;font-size:27.9px;line-height:27.9px;color:#4a89ee;font-weight:bold;transform:scaleX(0.98);transform-origin:0 0;">+ 4 More</div>
<div class="t" style="left:843.80px;top:1306.58px;font-size:27.9px;line-height:27.9px;color:#4a89ee;font-weight:bold;transform:scaleX(0.98);transform-origin:0 0;">+ 7 More</div>
<div class="t" style="left:1242.20px;top:1306.58px;font-size:27.9px;line-height:27.9px;color:#4a89ee;font-weight:bold;transform:scaleX(0.98);transform-origin:0 0;">+ 5 More</div>
<div class="t" style="left:1640.80px;top:1306.58px;font-size:27.9px;line-height:27.9px;color:#4a89ee;font-weight:bold;transform:scaleX(0.98);transform-origin:0 0;">+ 9 More</div>
<div class="a" style="left:46.20px;top:1423.90px;width:2786.80px;height:49.50px;background:#b9f6ca;border-radius:0px 0px 0px 0px;"></div><div class="t" style="left:60.60px;top:1436.93px;font-size:24.3px;line-height:24.3px;color:#111;font-weight:normal;transform:scaleX(0.93);transform-origin:0 0;">11:00 OT-2422-IMP</div><div class="t" style="right:57.50px;top:1435.54px;font-size:22.4px;line-height:22.4px;color:#111;font-weight:bold;transform:scaleX(0.85);transform-origin:100% 0;">100%</div>
<div class="a" style="left:843.20px;top:1476.10px;width:393.80px;height:49.50px;background:#b9f6ca;border-radius:12px 12px 12px 12px;"></div><div class="t" style="left:859.50px;top:1489.13px;font-size:24.3px;line-height:24.3px;color:#111;font-weight:normal;transform:scaleX(0.93);transform-origin:0 0;">06:51 OT-21-GR</div><div class="t" style="right:1653.50px;top:1487.74px;font-size:22.4px;line-height:22.4px;color:#111;font-weight:bold;transform:scaleX(0.85);transform-origin:100% 0;">100%</div>
<div class="a" style="left:1241.60px;top:1476.10px;width:394.00px;height:49.50px;background:#b9f6ca;border-radius:12px 12px 12px 12px;"></div><div class="t" style="left:1257.90px;top:1489.13px;font-size:24.3px;line-height:24.3px;color:#111;font-weight:normal;transform:scaleX(0.93);transform-origin:0 0;">08:16 OT-1041-24</div><div class="t" style="right:1254.90px;top:1487.74px;font-size:22.4px;line-height:22.4px;color:#111;font-weight:bold;transform:scaleX(0.85);transform-origin:100% 0;">100%</div>
<div class="a" style="left:1640.20px;top:1476.10px;width:792.00px;height:49.50px;background:#b9f6ca;border-radius:12px 12px 12px 12px;"></div><div class="t" style="left:1656.50px;top:1489.13px;font-size:24.3px;line-height:24.3px;color:#111;font-weight:normal;transform:scaleX(0.93);transform-origin:0 0;">08:50 OT-40-GR</div><div class="t" style="right:458.30px;top:1487.74px;font-size:22.4px;line-height:22.4px;color:#111;font-weight:bold;transform:scaleX(0.85);transform-origin:100% 0;">100%</div>
<div class="t" style="left:843.80px;top:1528.78px;font-size:27.9px;line-height:27.9px;color:#4a89ee;font-weight:bold;transform:scaleX(0.98);transform-origin:0 0;">+ 18 More</div>
<div class="t" style="left:1242.20px;top:1528.78px;font-size:27.9px;line-height:27.9px;color:#4a89ee;font-weight:bold;transform:scaleX(0.98);transform-origin:0 0;">+ 11 More</div>
<div class="t" style="left:1640.80px;top:1528.78px;font-size:27.9px;line-height:27.9px;color:#4a89ee;font-weight:bold;transform:scaleX(0.98);transform-origin:0 0;">+ 12 More</div>
<div class="t" style="left:2039.20px;top:1528.78px;font-size:27.9px;line-height:27.9px;color:#4a89ee;font-weight:bold;transform:scaleX(0.98);transform-origin:0 0;">+ 15 More</div>
<div class="a" style="left:46.20px;top:1649.90px;width:2786.80px;height:49.50px;background:#b9f6ca;border-radius:0px 12px 12px 0px;"></div><div class="t" style="left:60.60px;top:1662.93px;font-size:24.3px;line-height:24.3px;color:#111;font-weight:normal;transform:scaleX(0.93);transform-origin:0 0;">11:00 OT-2422-IMP</div><div class="t" style="right:57.50px;top:1661.54px;font-size:22.4px;line-height:22.4px;color:#111;font-weight:bold;transform:scaleX(0.85);transform-origin:100% 0;">100%</div>
<div class="a" style="left:444.80px;top:1702.10px;width:393.80px;height:49.50px;background:#ffcc80;border-radius:12px 12px 12px 12px;"></div><div class="t" style="left:459.20px;top:1715.13px;font-size:24.3px;line-height:24.3px;color:#111;font-weight:normal;transform:scaleX(0.93);transform-origin:0 0;">12:00 OT-37-GR</div><div class="t" style="right:2051.90px;top:1713.74px;font-size:22.4px;line-height:22.4px;color:#111;font-weight:bold;transform:scaleX(0.85);transform-origin:100% 0;">0%</div>
<div class="a" style="left:843.20px;top:1702.10px;width:393.80px;height:49.50px;background:#ffcc80;border-radius:12px 12px 12px 12px;"></div><div class="t" style="left:859.50px;top:1715.13px;font-size:24.3px;line-height:24.3px;color:#111;font-weight:normal;transform:scaleX(0.93);transform-origin:0 0;">03:00 OT-66-GR</div><div class="t" style="right:1653.50px;top:1713.74px;font-size:22.4px;line-height:22.4px;color:#111;font-weight:bold;transform:scaleX(0.85);transform-origin:100% 0;">0%</div>
<div class="a" style="left:1640.20px;top:1702.10px;width:393.80px;height:56.00px;background:#e0e0e0;border-radius:12px 12px 12px 12px;"></div><div class="a" style="left:1656.20px;top:1709.30px;width:36.00px;height:37.60px;background:#4a89ee;border-radius:9px;"></div><svg class="a" style="left:1656.20px;top:1709.30px" width="36" height="38" viewBox="0 0 36 38"><path d="M12 20l4.200 4.200 8.400-8.400" fill="none" stroke="#fff" stroke-width="2.700" stroke-linecap="round" stroke-linejoin="round"/></svg><div class="t" style="left:1702.60px;top:1717.83px;width:345.59px;overflow:hidden;white-space:nowrap;font-size:24.3px;line-height:24.3px;height:30px;color:#111;transform:scaleX(0.930);transform-origin:0 0">16:10 INSPECCION SEMANAL</div>
<div class="t" style="left:445.40px;top:1760.08px;font-size:27.9px;line-height:27.9px;color:#4a89ee;font-weight:bold;transform:scaleX(0.98);transform-origin:0 0;">+ 3 More</div>
<div class="t" style="left:843.80px;top:1760.08px;font-size:27.9px;line-height:27.9px;color:#4a89ee;font-weight:bold;transform:scaleX(0.98);transform-origin:0 0;">+ 3 More</div>
<div class="a" style="left:440.30px;top:1241.60px;width:76.80px;height:76.40px;border:4.5px solid #ff0000;border-radius:2px;box-sizing:border-box;"></div>
<svg class="a" style="left:0;top:0" width="2880" height="1872"><path d="M288 1262H403V1252L423.3 1272.3 403 1292.1V1282.6H288Z" fill="#ff0000"/><path d="M1474 1720.5H1589.1V1710.4L1609.9 1730.8 1589.1 1751.4V1741.2H1474Z" fill="#ff0000"/></svg>
<div class="a" style="left:1629.10px;top:1684.00px;width:76.90px;height:76.90px;border:4.4px solid #ff0000;border-radius:2px;box-sizing:border-box;"></div>
</body></html>
